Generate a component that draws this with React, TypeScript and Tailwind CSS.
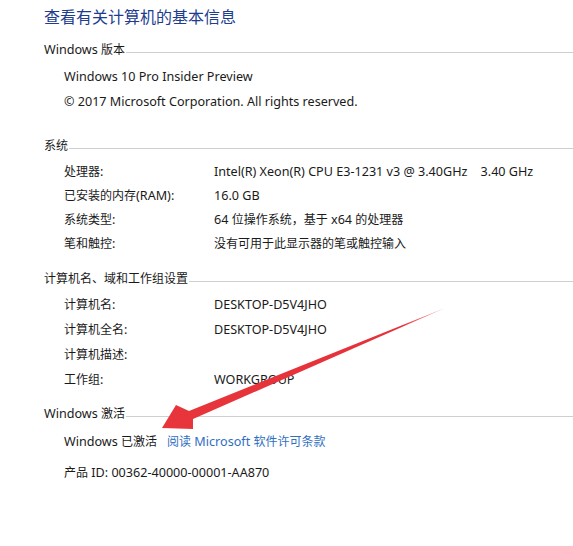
import React from "react";

const font = { fontFamily: "'Noto Sans', 'Noto Sans CJK SC', sans-serif" };

const cjk = /([\u2E80-\u9FFF\u3000-\u303F\uFF00-\uFFEF]+)/;

function T({ s }: { s: string }) {
  const parts = s.split(cjk);
  return (
    <>
      {parts.map((p, i) =>
        p === "" ? null : cjk.test(p) ? (
          <span key={i} className="text-[12px]">
            {p}
          </span>
        ) : (
          <span key={i}>{p}</span>
        )
      )}
    </>
  );
}

function Header({ text, mt }: { text: string; mt: string }) {
  return (
    <div className={`flex h-[20px] items-center ${mt}`}>
      <span className="whitespace-nowrap text-[12.6px] text-[#1a1a1a]">
        <T s={text} />
      </span>
      <div className="ml-[1px] mt-[5px] h-px flex-1 bg-[#cfcfcf]" />
    </div>
  );
}

function Row({ label, value, h = "h-[24px]" }: { label: string; value?: string; h?: string }) {
  return (
    <div className={`grid grid-cols-[150px_1fr] items-center pl-[20px] text-[12.6px] text-[#1a1a1a] ${h}`}>
      <span className="whitespace-pre">
        <T s={label} />
      </span>
      <span className="whitespace-pre">{value ? <T s={value} /> : null}</span>
    </div>
  );
}

export default function App() {
  return (
    <div className="relative h-[546px] w-[573px] overflow-hidden bg-white" style={font}>
      <div className="flex flex-col pl-[44px] pt-[6px]">
        <div className="flex h-[22px] items-center text-[16px] text-[#1e3d8f]">查看有关计算机的基本信息</div>

        <Header text="Windows 版本" mt="mt-[12px]" />
        <div className="mt-[5px] flex flex-col pl-[20px] text-[12.6px] text-[#1a1a1a]">
          <div className="flex h-[25px] items-center whitespace-pre">Windows 10 Pro Insider Preview</div>
          <div className="flex h-[25px] items-center whitespace-pre">© 2017 Microsoft Corporation. All rights reserved.</div>
        </div>

        <Header text="系统" mt="mt-[21px]" />
        <div className="mt-[4px] flex flex-col">
          <Row label="处理器:" value={"Intel(R) Xeon(R) CPU E3-1231 v3 @ 3.40GHz    3.40 GHz"} />
          <Row label="已安装的内存(RAM):" value="16.0 GB" />
          <Row label="系统类型:" value="64 位操作系统，基于 x64 的处理器" />
          <Row label="笔和触控:" value="没有可用于此显示器的笔或触控输入" />
        </div>

        <Header text="计算机名、域和工作组设置" mt="mt-[13px]" />
        <div className="mt-[4px] flex flex-col">
          <Row label="计算机名:" value="DESKTOP-D5V4JHO" h="h-[25px]" />
          <Row label="计算机全名:" value="DESKTOP-D5V4JHO" h="h-[25px]" />
          <Row label="计算机描述:" value="" h="h-[25px]" />
          <Row label="工作组:" value="WORKGROUP" h="h-[25px]" />
        </div>

        <Header text="Windows 激活" mt="mt-[11px]" />
        <div className="mt-[6px] flex flex-col pl-[20px] text-[12.6px] text-[#1a1a1a]">
          <div className="flex h-[24px] items-center whitespace-pre">
            <span>
              <T s="Windows 已激活" />
            </span>
            <span className="ml-[10px] text-[#2f6fc0]">
              <T s="阅读 Microsoft 软件许可条款" />
            </span>
          </div>
          <div className="mt-[7px] flex h-[24px] items-center whitespace-pre">
            <T s="产品 ID: 00362-40000-00001-AA870" />
          </div>
        </div>
      </div>

      <svg className="pointer-events-none absolute left-0 top-0" width="573" height="546" viewBox="0 0 573 546">
        <defs>
          <linearGradient id="ag" x1="445" y1="308" x2="163" y2="427" gradientUnits="userSpaceOnUse">
            <stop offset="0" stopColor="#e66a70" stopOpacity="0.6" />
            <stop offset="0.15" stopColor="#e5323a" />
            <stop offset="1" stopColor="#e8343b" />
          </linearGradient>
        </defs>
        <polygon points="162,428 176,405 189,411 445,308 193,419 193,429" fill="url(#ag)" />
      </svg>
    </div>
  );
}
